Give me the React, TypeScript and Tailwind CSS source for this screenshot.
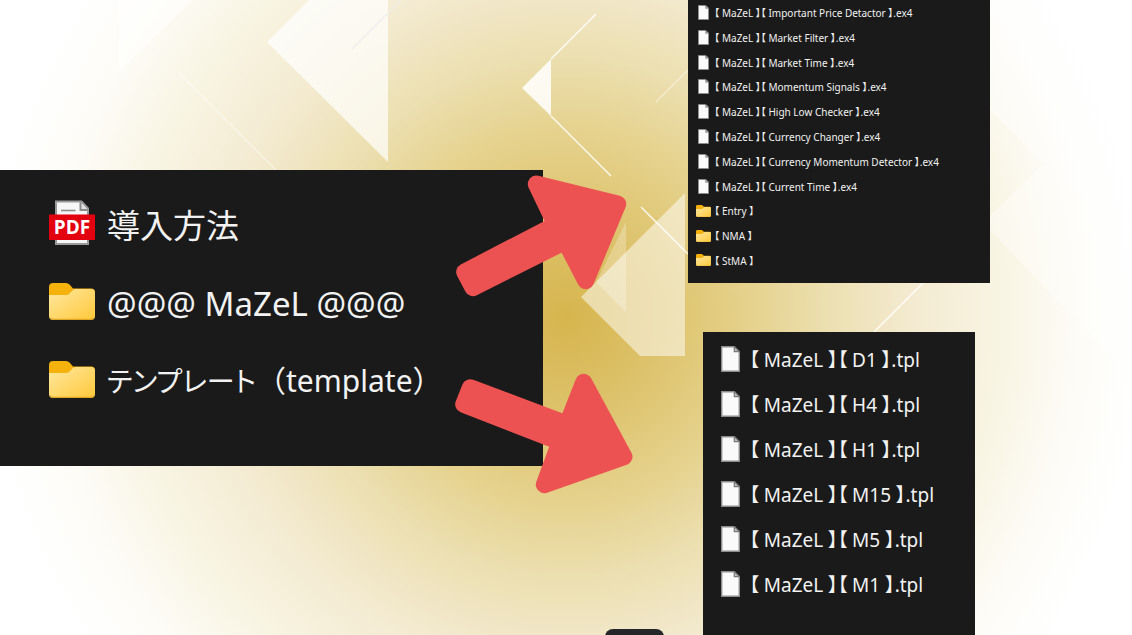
import clsx from "clsx";

type Kind = "pdf" | "folder" | "file";
type Entry = { kind: Kind; name: string; kana?: string };

const downloads: Entry[] = [
  { kind: "pdf", name: "導入方法" },
  { kind: "folder", name: "@@@ MaZeL @@@" },
  { kind: "folder", kana: "テンプレート", name: "（template）" },
];

const indicators: Entry[] = [
  { kind: "file", name: "【 MaZeL 】【 Important Price Detactor 】.ex4" },
  { kind: "file", name: "【 MaZeL 】【 Market Filter 】.ex4" },
  { kind: "file", name: "【 MaZeL 】【 Market Time 】.ex4" },
  { kind: "file", name: "【 MaZeL 】【 Momentum Signals 】.ex4" },
  { kind: "file", name: "【 MaZeL 】【 High Low Checker 】.ex4" },
  { kind: "file", name: "【 MaZeL 】【 Currency Changer 】.ex4" },
  { kind: "file", name: "【 MaZeL 】【 Currency Momentum Detector 】.ex4" },
  { kind: "file", name: "【 MaZeL 】【 Current Time 】.ex4" },
  { kind: "folder", name: "【 Entry 】" },
  { kind: "folder", name: "【 NMA 】" },
  { kind: "folder", name: "【 StMA 】" },
];

const templates: Entry[] = ["D1", "H4", "H1", "M15", "M5", "M1"].map((tf) => ({
  kind: "file",
  name: `【 MaZeL 】【 ${tf} 】.tpl`,
}));

function FolderIcon({ className }: { className?: string }) {
  return (
    <svg viewBox="0 0 46 37" className={className} aria-hidden="true">
      <defs>
        <linearGradient id="folder-front" x1="0" y1="0" x2="1" y2="1">
          <stop offset="0" stopColor="#ffe8a0" />
          <stop offset="1" stopColor="#ffc83a" />
        </linearGradient>
      </defs>
      <path d="M0 4a4 4 0 0 1 4-4h13q2 0 3.500 1.500L24 5.500h18a4 4 0 0 1 4 4V20H0z" fill="#f5b10c" />
      <path d="M0 12h17q2 0 3.500-1.500L24 7q1-1 3-1h15a4 4 0 0 1 4 4v23a4 4 0 0 1-4 4H4a4 4 0 0 1-4-4z" fill="url(#folder-front)" />
      <path d="M1 34.500q1 1.800 3 1.800h38q2 0 3-1.800" fill="none" stroke="#d99a16" strokeWidth="1" />
    </svg>
  );
}

function FileIcon({ className }: { className?: string }) {
  return (
    <svg viewBox="0 0 19 26" className={className} aria-hidden="true">
      <path d="M.7.7h12.600l5 5v19.600H.7z" fill="#fafafa" stroke="#8c8c8c" strokeWidth="1.400" />
      <path d="M13.300.7v5h5z" fill="#c4c4c4" stroke="#777" strokeWidth="1.200" />
    </svg>
  );
}

function PdfIcon({ className }: { className?: string }) {
  return (
    <svg viewBox="0 0 46 46" className={className} aria-hidden="true">
      <path d="M7 1.500h25.500l6.500 7V44H7z" fill="#f7f7f7" stroke="#9a9a9a" strokeWidth="2" />
      <path d="M31.500 2v8h7" fill="#e2e2e2" stroke="#8c8c8c" strokeWidth="2" />
      <path d="M12 10.500h14.500" stroke="#8c8c8c" strokeWidth="1.600" />
      <rect y="14.500" width="46" height="25.500" fill="#e3000f" />
      <text x="23" y="34" textAnchor="middle" fontFamily="Open Sans, sans-serif" fontWeight="700" fontSize="19" fill="#fff">
        PDF
      </text>
    </svg>
  );
}

const icons = { pdf: PdfIcon, folder: FolderIcon, file: FileIcon };

const sizes = {
  lg: {
    row: "h-[78px] gap-3 text-[33px]",
    slot: "w-[46px] pb-1",
    icon: { pdf: "w-[46px] h-[46px]", folder: "w-[46px] h-[37px]", file: "w-[32px] h-[44px]" },
  },
  md: {
    row: "h-[45px] gap-2 text-[19px]",
    slot: "w-[22px] pb-1",
    icon: { pdf: "w-[22px] h-[22px]", folder: "w-[22px] h-[18px]", file: "w-[19px] h-[26px]" },
  },
  sm: {
    row: "h-6 gap-[3px] text-[10px]",
    slot: "w-[15px] pb-px",
    icon: { pdf: "w-[15px] h-[15px]", folder: "w-[15px] h-[12px]", file: "w-[11px] h-[15px]" },
  },
};

function FileList({ entries, size, className }: { entries: Entry[]; size: keyof typeof sizes; className?: string }) {
  const s = sizes[size];
  return (
    <ul className={clsx("flex flex-col justify-between", className)}>
      {entries.map(({ kind, name, kana }) => {
        const Icon = icons[kind];
        return (
          <li key={name} className={clsx("flex items-center leading-none whitespace-nowrap", s.row)}>
            <span className={clsx("flex shrink-0 justify-center", s.slot)}>
              <Icon className={s.icon[kind]} />
            </span>
            {kana ? (
              <span className="text-[30px]">
                <span className="text-[28px] [font-feature-settings:'palt']">{kana}</span>
                {name}
              </span>
            ) : (
              <span className="[font-feature-settings:'palt']">{name}</span>
            )}
          </li>
        );
      })}
    </ul>
  );
}

function Backdrop() {
  return (
    <svg
      viewBox="0 0 1132 635"
      preserveAspectRatio="xMidYMid slice"
      className="absolute inset-0 -z-10 h-full w-full"
      fill="#fff"
      stroke="none"
      aria-hidden="true"
    >
      <path d="M119 0h73l-73 72z" fillOpacity=".5" />
      <path d="M309 0h79v162L267 42z" fillOpacity=".7" />
      <path d="M551 59v57l-29-28z" fillOpacity=".85" />
      <path d="M685 193v163h-45l-59-59z" fillOpacity=".5" />
      <path d="M626 222v90l-30-30z" fillOpacity=".25" />
      <path d="M990 110L1132 252V0H990z" fillOpacity=".4" />
      <path d="M990 216l54-53 88 88v105h-22L990 230z" fillOpacity=".35" />
      <g fill="none" stroke="#fff" strokeWidth="1.500">
        <path d="M551 59l45-45M551 116l60 60M641 207l47 47M874 332l50-50" strokeOpacity=".85" />
        <path d="M178 72l98 98M656 102l32-32" strokeOpacity=".4" />
        <path d="M352 49l49-49" stroke="#ececec" strokeOpacity=".8" />
      </g>
    </svg>
  );
}

function Arrows() {
  return (
    <svg
      viewBox="0 0 1132 635"
      preserveAspectRatio="xMidYMid slice"
      className="pointer-events-none absolute inset-0 h-full w-full"
      fill="#ed5252"
      stroke="#ed5252"
      strokeWidth="17"
      strokeLinejoin="round"
      aria-hidden="true"
    >
      <path d="M464.700 272L555.700 224.700 536.300 184 617.700 204 585.700 280.700 565.300 241.300 473 287.700z" />
      <path d="M470.300 387.700L567.200 424.300 583.700 382.300 624 456.700 544.300 484.700 560 441.800 463.700 404.300z" />
    </svg>
  );
}

export default function App() {
  return (
    <main className="relative isolate flex h-screen items-start overflow-hidden bg-[radial-gradient(circle_at_center,#d6b54d_0,#dcc067_80px,#e5d18b_180px,#ecdfb0_260px,#f3ead0_345px,#f8f4e2_430px,#fdfcf7_515px,#fff_580px)] font-['Noto_Sans','Noto_Sans_CJK_JP',sans-serif] text-[#f2f2f2]">
      <Backdrop />

      <section className="mt-[170px] w-[48%] bg-[#1a1a1a] pt-4 pb-[46px] pl-[49px]">
        <FileList entries={downloads} size="lg" />
      </section>

      <div className="ml-[145px] flex h-full flex-col items-center gap-[49px]">
        <section className="w-[302px] bg-[#1a1a1a] pt-px pb-[10px] pl-2">
          <FileList entries={indicators} size="sm" className="h-[272px]" />
        </section>
        <section className="w-[272px] flex-1 bg-[#1a1a1a] pt-[6px] pl-4">
          <FileList entries={templates} size="md" />
        </section>
      </div>

      <Arrows />
      <div className="absolute -bottom-4 left-[605px] h-[22px] w-[59px] rounded-lg bg-[#25262a]" />
    </main>
  );
}
